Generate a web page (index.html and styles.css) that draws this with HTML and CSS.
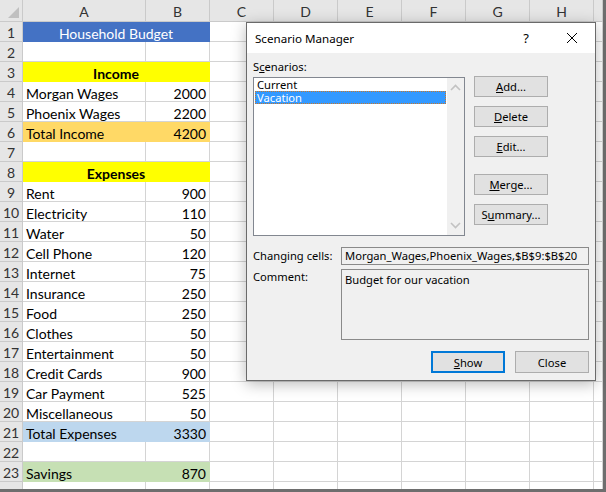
FILE: index.html
```html
<!DOCTYPE html>
<html>
<head>
<meta charset="utf-8">
<link rel="stylesheet" href="styles.css">
</head>
<body>
<div class="frame">
  <div class="sheet">
    <div class="corner"><span class="tri"></span></div><div class="ch">A</div><div class="ch">B</div><div class="ch">C</div><div class="ch">D</div><div class="ch">E</div><div class="ch">F</div><div class="ch">G</div><div class="ch">H</div><div class="ch"></div>

    <div class="rh">1</div><div class="c span2 f-blue center">Household Budget</div><div class="c"></div><div class="c"></div><div class="c"></div><div class="c"></div><div class="c"></div><div class="c"></div><div class="c"></div>
    <div class="rh">2</div><div class="c"></div><div class="c"></div><div class="c"></div><div class="c"></div><div class="c"></div><div class="c"></div><div class="c"></div><div class="c"></div><div class="c"></div>
    <div class="rh">3</div><div class="c span2 f-yellow center bold">Income</div><div class="c"></div><div class="c"></div><div class="c"></div><div class="c"></div><div class="c"></div><div class="c"></div><div class="c"></div>
    <div class="rh">4</div><div class="c">Morgan Wages</div><div class="c num">2000</div><div class="c"></div><div class="c"></div><div class="c"></div><div class="c"></div><div class="c"></div><div class="c"></div><div class="c"></div>
    <div class="rh">5</div><div class="c">Phoenix Wages</div><div class="c num">2200</div><div class="c"></div><div class="c"></div><div class="c"></div><div class="c"></div><div class="c"></div><div class="c"></div><div class="c"></div>
    <div class="rh">6</div><div class="c f-orange">Total Income</div><div class="c num f-orange">4200</div><div class="c"></div><div class="c"></div><div class="c"></div><div class="c"></div><div class="c"></div><div class="c"></div><div class="c"></div>
    <div class="rh">7</div><div class="c"></div><div class="c"></div><div class="c"></div><div class="c"></div><div class="c"></div><div class="c"></div><div class="c"></div><div class="c"></div><div class="c"></div>
    <div class="rh">8</div><div class="c span2 f-yellow center bold">Expenses</div><div class="c"></div><div class="c"></div><div class="c"></div><div class="c"></div><div class="c"></div><div class="c"></div><div class="c"></div>
    <div class="rh">9</div><div class="c">Rent</div><div class="c num">900</div><div class="c"></div><div class="c"></div><div class="c"></div><div class="c"></div><div class="c"></div><div class="c"></div><div class="c"></div>
    <div class="rh">10</div><div class="c">Electricity</div><div class="c num">110</div><div class="c"></div><div class="c"></div><div class="c"></div><div class="c"></div><div class="c"></div><div class="c"></div><div class="c"></div>
    <div class="rh">11</div><div class="c">Water</div><div class="c num">50</div><div class="c"></div><div class="c"></div><div class="c"></div><div class="c"></div><div class="c"></div><div class="c"></div><div class="c"></div>
    <div class="rh">12</div><div class="c">Cell Phone</div><div class="c num">120</div><div class="c"></div><div class="c"></div><div class="c"></div><div class="c"></div><div class="c"></div><div class="c"></div><div class="c"></div>
    <div class="rh">13</div><div class="c">Internet</div><div class="c num">75</div><div class="c"></div><div class="c"></div><div class="c"></div><div class="c"></div><div class="c"></div><div class="c"></div><div class="c"></div>
    <div class="rh">14</div><div class="c">Insurance</div><div class="c num">250</div><div class="c"></div><div class="c"></div><div class="c"></div><div class="c"></div><div class="c"></div><div class="c"></div><div class="c"></div>
    <div class="rh">15</div><div class="c">Food</div><div class="c num">250</div><div class="c"></div><div class="c"></div><div class="c"></div><div class="c"></div><div class="c"></div><div class="c"></div><div class="c"></div>
    <div class="rh">16</div><div class="c">Clothes</div><div class="c num">50</div><div class="c"></div><div class="c"></div><div class="c"></div><div class="c"></div><div class="c"></div><div class="c"></div><div class="c"></div>
    <div class="rh">17</div><div class="c">Entertainment</div><div class="c num">50</div><div class="c"></div><div class="c"></div><div class="c"></div><div class="c"></div><div class="c"></div><div class="c"></div><div class="c"></div>
    <div class="rh">18</div><div class="c">Credit Cards</div><div class="c num">900</div><div class="c"></div><div class="c"></div><div class="c"></div><div class="c"></div><div class="c"></div><div class="c"></div><div class="c"></div>
    <div class="rh">19</div><div class="c">Car Payment</div><div class="c num">525</div><div class="c"></div><div class="c"></div><div class="c"></div><div class="c"></div><div class="c"></div><div class="c"></div><div class="c"></div>
    <div class="rh">20</div><div class="c">Miscellaneous</div><div class="c num">50</div><div class="c"></div><div class="c"></div><div class="c"></div><div class="c"></div><div class="c"></div><div class="c"></div><div class="c"></div>
    <div class="rh">21</div><div class="c f-lblue">Total Expenses</div><div class="c num f-lblue">3330</div><div class="c"></div><div class="c"></div><div class="c"></div><div class="c"></div><div class="c"></div><div class="c"></div><div class="c"></div>
    <div class="rh">22</div><div class="c"></div><div class="c"></div><div class="c"></div><div class="c"></div><div class="c"></div><div class="c"></div><div class="c"></div><div class="c"></div><div class="c"></div>
    <div class="rh">23</div><div class="c f-green">Savings</div><div class="c num f-green">870</div><div class="c"></div><div class="c"></div><div class="c"></div><div class="c"></div><div class="c"></div><div class="c"></div><div class="c"></div>
    <div class="rh last"></div><div class="c"></div><div class="c"></div><div class="c"></div><div class="c"></div><div class="c"></div><div class="c"></div><div class="c"></div><div class="c"></div><div class="c"></div>
  </div>

  <div class="dialog">
    <div class="titlebar">
      <span class="title">Scenario Manager</span>
      <span class="tb-btn">?</span>
      <span class="tb-btn">
        <svg width="12" height="12" viewBox="0 0 12 12"><path d="M1 1L11 11M11 1L1 11" stroke="#000" stroke-width="1" fill="none"/></svg>
      </span>
    </div>
    <div class="body">
      <div class="top">
        <div class="left">
          <div class="label">S<u>c</u>enarios:</div>
          <div class="listbox">
            <div class="items">
              <div class="item">Current</div>
              <div class="item sel">Vacation</div>
            </div>
            <div class="scroll">
              <svg width="11" height="7" viewBox="0 0 11 7"><path d="M1 6L5.5 1.5L10 6" stroke="#c2c2c2" stroke-width="1.6" fill="none"/></svg>
              <svg width="11" height="7" viewBox="0 0 11 7"><path d="M1 1L5.5 5.5L10 1" stroke="#c2c2c2" stroke-width="1.6" fill="none"/></svg>
            </div>
          </div>
        </div>
        <div class="btns">
          <div class="btn"><u>A</u>dd...</div>
          <div class="btn"><u>D</u>elete</div>
          <div class="btn"><u>E</u>dit...</div>
          <div class="btn gap"><u>M</u>erge...</div>
          <div class="btn">S<u>u</u>mmary...</div>
        </div>
      </div>
      <div class="frow changing">
        <div class="flabel">Changing cells:</div>
        <div class="field">Morgan_Wages,Phoenix_Wages,$B$9:$B$20</div>
      </div>
      <div class="frow comment">
        <div class="flabel">Comment:</div>
        <div class="field area">Budget for our vacation</div>
      </div>
      <div class="bottom">
        <div class="btn wide default"><u>S</u>how</div>
        <div class="btn wide">Close</div>
      </div>
    </div>
  </div>
</div>
</body>
</html>
```

FILE: styles.css
```css
html, body {
  margin: 0;
  padding: 0;
}
body {
  width: 606px;
  height: 492px;
  overflow: hidden;
}
.frame {
  position: relative;
  width: 606px;
  height: 492px;
  background: #6e6e6e;
}
.sheet {
  width: 603px;
  height: 489px;
  overflow: hidden;
  background: #fff;
  display: grid;
  grid-template-columns: 23px 123px repeat(7, 64px) 1fr;
  grid-template-rows: 22px;
  grid-auto-rows: 20px;
  font-family: "Lato", "Open Sans", sans-serif;
  font-size: 14px;
  color: #000;
}
.corner, .ch, .rh {
  background: #e6e6e6;
  box-sizing: border-box;
  border-right: 1px solid #cacaca;
  border-bottom: 1px solid #cacaca;
  color: #333;
  display: flex;
  align-items: center;
  justify-content: center;
}
.ch {
  padding-top: 1px;
}
.corner {
  position: relative;
}
.tri {
  position: absolute;
  right: 3px;
  bottom: 3px;
  width: 0;
  height: 0;
  border-left: 11px solid transparent;
  border-bottom: 11px solid #c0c0c0;
}
.rh {
  font-size: 14px;
  line-height: 20px;
  padding-top: 2px;
}
.c {
  box-sizing: border-box;
  border-right: 1px solid #d4d4d4;
  border-bottom: 1px solid #d4d4d4;
  padding: 2px 3px 0;
  line-height: 19px;
  white-space: nowrap;
  overflow: hidden;
}
.span2 { grid-column: span 2; }
.center { text-align: center; }
.bold { font-weight: 700; }
.num { text-align: right; }
.f-blue { background: #4472c4; border-color: #4472c4; color: #fff; }
.f-yellow { background: #ffff00; border-color: #ffff00; }
.f-orange { background: #ffd966; border-color: #ffd966; }
.f-lblue { background: #bdd7ee; border-color: #bdd7ee; }
.f-green { background: #c6e0b4; border-color: #c6e0b4; }

/* Dialog */
.dialog {
  position: absolute;
  left: 246px;
  top: 22px;
  width: 350px;
  height: 359px;
  box-sizing: border-box;
  border: 1px solid #6a6a6a;
  background: #f0f0f0;
  box-shadow: 0 3px 14px rgba(0, 0, 0, 0.28);
  display: flex;
  flex-direction: column;
  font-family: "Segoe UI", "Noto Sans", sans-serif;
  font-size: 11.2px;
  color: #000;
}
.titlebar {
  height: 30px;
  background: #fff;
  display: flex;
  align-items: center;
  padding-left: 8px;
  flex: none;
}
.title {
  flex: 1;
  font-size: 11.6px;
}
.tb-btn {
  width: 46px;
  height: 30px;
  display: flex;
  align-items: center;
  justify-content: center;
  font-size: 13px;
}
.body {
  padding: 6px 6px 7px 6px;
  display: flex;
  flex-direction: column;
}
.top {
  display: flex;
  gap: 9px;
}
.left {
  display: flex;
  flex-direction: column;
}
.label {
  height: 16px;
  line-height: 16px;
  margin-bottom: 2px;
}
.listbox {
  width: 212px;
  height: 159px;
  box-sizing: border-box;
  border: 1px solid #828790;
  background: #fff;
  display: flex;
}
.items {
  flex: 1;
  padding: 0 1px;
}
.item {
  height: 13px;
  line-height: 13px;
  padding-left: 2px;
  overflow: hidden;
}
.item.sel {
  background: #3399ff;
  color: #fff;
  outline: 1px dotted #c9782a;
  outline-offset: -1px;
}
.scroll {
  width: 17px;
  background: #f0f0f0;
  display: flex;
  flex-direction: column;
  justify-content: space-between;
  align-items: center;
  padding: 6px 0 6px;
}
.btns {
  display: flex;
  flex-direction: column;
  gap: 9px;
  padding-top: 17px;
}
.btn {
  width: 74px;
  height: 21px;
  box-sizing: border-box;
  border: 1px solid #adadad;
  background: #e1e1e1;
  display: flex;
  align-items: center;
  justify-content: center;
}
.btn.gap {
  margin-top: 8px;
}
.frow {
  display: flex;
}
.changing {
  margin-top: 11px;
  align-items: center;
}
.comment {
  margin-top: 4px;
}
.flabel {
  width: 88px;
  flex: none;
  line-height: 16px;
}
.field {
  flex: 1;
  height: 18px;
  box-sizing: border-box;
  border: 1px solid #8a8a8a;
  padding: 0 3px;
  line-height: 16px;
  white-space: nowrap;
}
.field.area {
  height: 71px;
  padding-top: 2px;
}
.bottom {
  margin-top: 11px;
  display: flex;
  justify-content: flex-end;
  gap: 10px;
}
.btn.wide {
  width: 74px;
  height: 22px;
}
.btn.default {
  border: 2px solid #0078d7;
}
```
